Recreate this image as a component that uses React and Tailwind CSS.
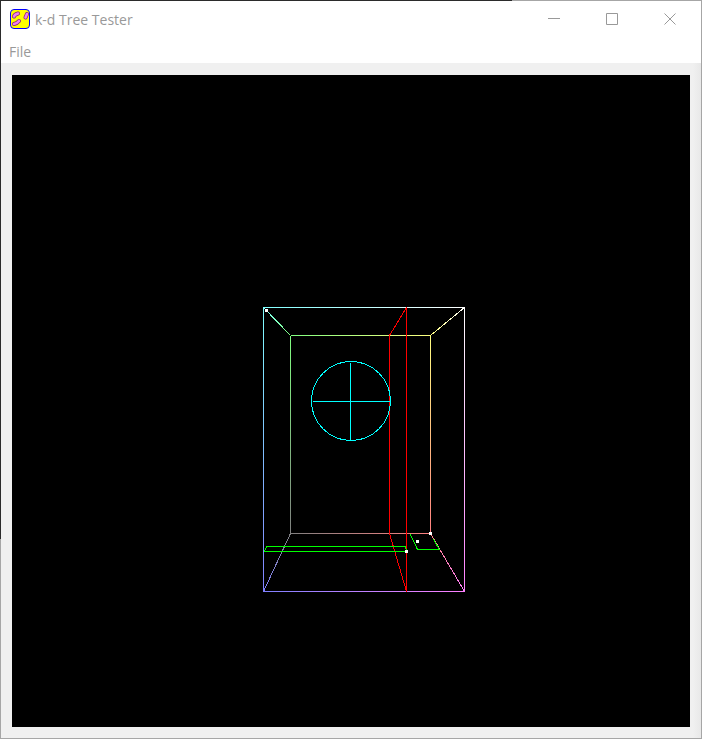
import React from 'react';

const corners = {
  ftl: { x: 251, y: 232, c: '#80ffff' },
  ftr: { x: 452, y: 232, c: '#ffffff' },
  fbl: { x: 251, y: 516, c: '#8080ff' },
  fbr: { x: 452, y: 516, c: '#ff80ff' },
  btl: { x: 278, y: 260, c: '#80ff80' },
  btr: { x: 418, y: 260, c: '#ffff80' },
  bbl: { x: 278, y: 458, c: '#808080' },
  bbr: { x: 418, y: 458, c: '#ff8080' },
};

const edges = [
  ['ftl', 'ftr'], ['ftl', 'fbl'], ['ftr', 'fbr'], ['fbl', 'fbr'],
  ['btl', 'btr'], ['btl', 'bbl'], ['btr', 'bbr'], ['bbl', 'bbr'],
  ['ftl', 'btl'], ['ftr', 'btr'], ['fbl', 'bbl'], ['fbr', 'bbr'],
];

const points = [[254, 235], [394, 476], [405, 466], [418, 458]];

function Scene() {
  return (
    <svg
      viewBox="0 0 678 652"
      className="block h-full w-full"
      fill="none"
      shapeRendering="crispEdges"
      role="img"
      aria-label="k-d tree view"
    >
      <defs>
        {edges.map(([a, b]) => (
          <linearGradient
            key={a + b}
            id={a + b}
            gradientUnits="userSpaceOnUse"
            x1={corners[a].x}
            y1={corners[a].y}
            x2={corners[b].x}
            y2={corners[b].y}
          >
            <stop offset="0" stopColor={corners[a].c} />
            <stop offset="1" stopColor={corners[b].c} />
          </linearGradient>
        ))}
      </defs>
      <g transform="translate(0.5 0.5)">
        {edges.map(([a, b]) => (
          <path
            key={a + b}
            d={`M${corners[a].x} ${corners[a].y}L${corners[b].x} ${corners[b].y}`}
            stroke={`url(#${a + b})`}
          />
        ))}
        <path d="M377 260V458L394 516V232Z" stroke="#ff0000" strokeLinejoin="bevel" />
        <path d="M252 476L254 471H393L394 476Z" stroke="#00ff00" strokeLinejoin="bevel" />
        <path d="M398 459L405 474H427L421 464" stroke="#00ff00" strokeLinejoin="bevel" />
        <path d="M338 287V365M300 326H378" stroke="#00ffff" />
        <circle cx="338.5" cy="325.5" r="39.5" stroke="#00ffff" />
      </g>
      {points.map(([x, y]) => (
        <rect key={`${x}-${y}`} x={x - 1} y={y - 1} width="3" height="3" fill="#ffffff" />
      ))}
    </svg>
  );
}

const blobs = 'M4 7.5Q4.5 5.500 8 4.500M17 5L15.500 8.500M4 15Q7 14.500 9 12';

function AppIcon() {
  return (
    <svg width="20" height="20" viewBox="0 0 20 20" aria-hidden="true">
      <rect x="0.5" y="0.5" width="19" height="19" rx="3.5" fill="#ffff00" stroke="#0000ff" />
      <g strokeLinecap="round" fill="none">
        <path d={blobs} stroke="#802070" strokeWidth="4" />
        <path d={blobs} stroke="#f080f0" strokeWidth="2.600" />
      </g>
    </svg>
  );
}

const controls = [
  { label: 'Minimize', d: 'M0 5.5H12' },
  { label: 'Maximize', d: 'M0.5 0.5H11.5V11.5H0.5Z' },
  { label: 'Close', d: 'M0.5 0.5L11.5 11.5M11.5 0.5L0.5 11.5' },
];

export default function App() {
  return (
    <div className="h-screen bg-[#a6a6a6] bg-[linear-gradient(#2b2b2b,#2b2b2b)] bg-[length:73%_73%] bg-no-repeat p-px font-['Open_Sans','Noto_Sans',sans-serif] text-sm text-[#999999]">
      <div className="flex h-full flex-col bg-[#f0f0f0]">
        <header className="flex h-9 shrink-0 items-center bg-white pr-0.5 pl-[9px]">
          <AppIcon />
          <h1 className="ml-[5px] grow pt-0.5 whitespace-nowrap">k-d Tree Tester</h1>
          <div className="flex h-full">
            {controls.map(({ label, d }) => (
              <button key={label} type="button" aria-label={label} className="flex w-[58px] items-center justify-center">
                <svg width="12" height="12" viewBox="0 0 12 12" fill="none" stroke="#999999" aria-hidden="true">
                  <path d={d} />
                </svg>
              </button>
            ))}
          </div>
        </header>
        <nav className="flex h-[26px] shrink-0 items-center bg-white px-2 pt-1">
          <button type="button">File</button>
        </nav>
        <main className="min-h-0 grow bg-[linear-gradient(to_left,#e8e8e8,#f0f0f0_8px)] px-[11px] pt-3 pb-[11px]">
          <div className="h-full bg-black">
            <Scene />
          </div>
        </main>
      </div>
    </div>
  );
}
